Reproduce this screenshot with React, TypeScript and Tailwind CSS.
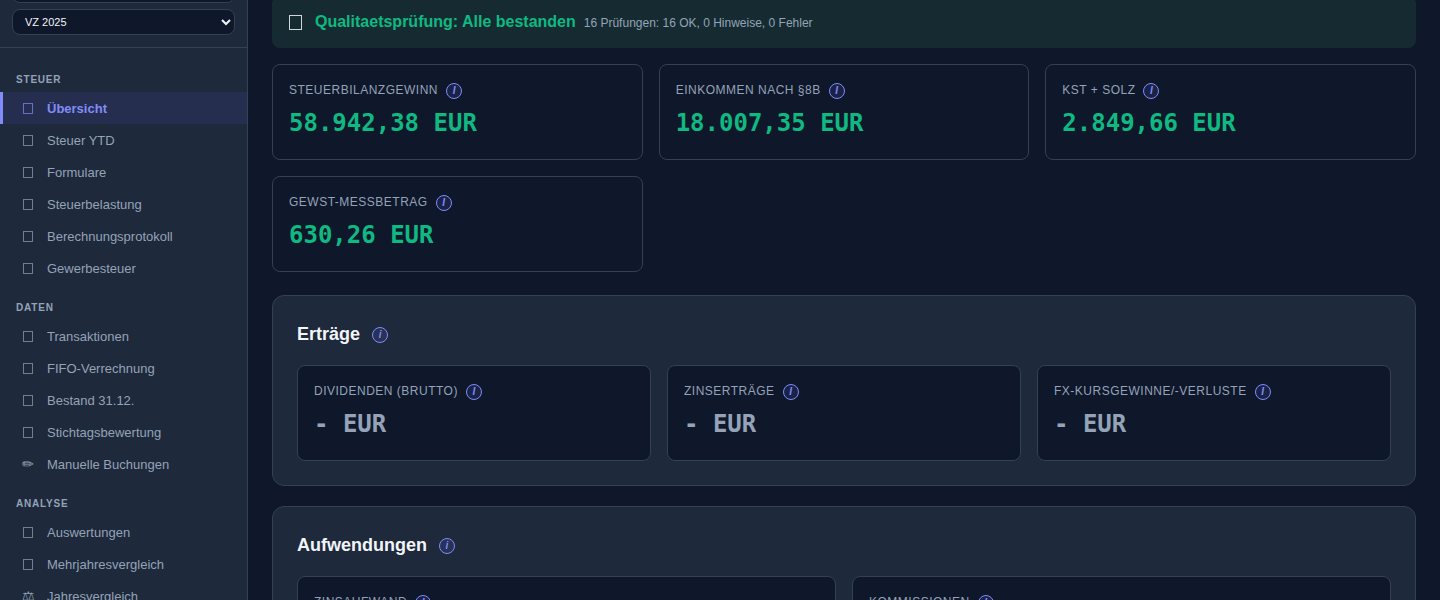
import type { ReactNode } from "react";

type NavEntry = { label: string; glyph?: string };

const sections: { title: string; items: NavEntry[] }[] = [
  {
    title: "Steuer",
    items: [
      { label: "Übersicht" },
      { label: "Steuer YTD" },
      { label: "Formulare" },
      { label: "Steuerbelastung" },
      { label: "Berechnungsprotokoll" },
      { label: "Gewerbesteuer" },
    ],
  },
  {
    title: "Daten",
    items: [
      { label: "Transaktionen" },
      { label: "FIFO-Verrechnung" },
      { label: "Bestand 31.12." },
      { label: "Stichtagsbewertung" },
      { label: "Manuelle Buchungen", glyph: "✏" },
    ],
  },
  {
    title: "Analyse",
    items: [
      { label: "Auswertungen" },
      { label: "Mehrjahresvergleich" },
      { label: "Jahresvergleich", glyph: "⚖" },
    ],
  },
];

function InfoButton({ topic, children }: { topic: string; children: string }) {
  return (
    <button
      type="button"
      aria-label={`Info: ${topic}`}
      className="flex size-4 shrink-0 items-center justify-center rounded-full border border-[#818cf8] bg-[#6366f1]/15 text-[10px] leading-none font-bold text-[#818cf8] italic"
    >
      {children}
    </button>
  );
}

function Card({ label, value, muted = false }: { label: string; value: string; muted?: boolean }) {
  return (
    <div className="h-24 rounded-lg border border-[#334155] bg-[#0f172a] px-4 pt-4">
      <div className="flex h-5 items-center gap-2">
        <span className="pb-0.5 text-[12px] leading-4 tracking-[0.5px] text-[#94a3b8] uppercase">{label}</span>
        <InfoButton topic={label}>I</InfoButton>
      </div>
      <div
        className={`mt-1.5 font-['DejaVu_Sans_Mono',monospace] text-2xl leading-8 font-bold ${muted ? "text-[#94a3b8]" : "text-[#10b981]"}`}
      >
        {value}
      </div>
    </div>
  );
}

function Panel({ title, children }: { title: string; children: ReactNode }) {
  return (
    <section className="rounded-xl border border-[#334155] bg-[#1e293b] p-6">
      <div className="mb-4 flex h-[29px] items-center gap-3">
        <h2 className="pb-0.5 text-[18px] leading-7 font-bold text-[#f1f5f9]">{title}</h2>
        <InfoButton topic={title}>i</InfoButton>
      </div>
      {children}
    </section>
  );
}

export default function App() {
  return (
    <div className="flex h-screen overflow-hidden bg-[#0f172a] font-['Liberation_Sans',Arial,sans-serif] text-[#f1f5f9]">
      <aside className="w-[248px] shrink-0 overflow-hidden border-r border-[#334155] bg-[#1e293b]">
        <div className="-mt-6 flex flex-col gap-1.5 border-b border-[#334155] px-3 pb-3">
          <select
            aria-label="Mandant"
            className="h-[27px] w-full rounded-lg border border-[#334155] bg-[#0f172a] px-2 text-[11px] text-[#f1f5f9]"
          >
            <option></option>
          </select>
          <select
            aria-label="Veranlagungszeitraum"
            className="h-[26px] w-full rounded-lg border border-[#334155] bg-[#0f172a] px-2 text-[11px] text-[#f1f5f9]"
          >
            <option>VZ 2025</option>
          </select>
        </div>
        <nav className="pt-2">
          {sections.map((section, s) => (
            <div key={section.title}>
              <div className="px-4 pt-[17px] pb-[5px] text-[10px] leading-[14px] font-bold tracking-[0.8px] text-[#94a3b8] uppercase">
                {section.title}
              </div>
              {section.items.map((item, i) => (
                <a
                  key={item.label}
                  href="#"
                  className={`flex h-8 items-center gap-2.5 border-l-[3px] pl-4 text-[13px] ${
                    s === 0 && i === 0
                      ? "border-[#818cf8] bg-[#252e4f] font-bold text-[#818cf8]"
                      : "border-transparent text-[#94a3b8]"
                  }`}
                >
                  <span className="flex w-[18px] items-center justify-center text-[14px] font-normal">
                    {item.glyph ?? <span className="h-[11px] w-2.5 border border-current opacity-70" />}
                  </span>
                  <span className="pt-0.5">{item.label}</span>
                </a>
              ))}
            </div>
          ))}
        </nav>
      </aside>

      <main className="-mt-1 min-w-0 flex-1 px-6">
        <div className="flex h-[52px] items-center gap-3 rounded-lg bg-[#162b31] px-4">
          <span className="flex w-[15px] justify-center">
            <span className="h-[15px] w-[13px] border border-[#f1f5f9]/85" />
          </span>
          <div className="flex items-baseline gap-2">
            <strong className="text-base font-bold text-[#10b981]">Qualitaetsprüfung: Alle bestanden</strong>
            <span className="text-[12px] text-[#94a3b8]">16 Prüfungen: 16 OK, 0 Hinweise, 0 Fehler</span>
          </div>
        </div>

        <div className="mt-4 mb-[23px] grid grid-cols-3 gap-4">
          <Card label="Steuerbilanzgewinn" value="58.942,38 EUR" />
          <Card label="Einkommen nach §8b" value="18.007,35 EUR" />
          <Card label="KSt + SolZ" value="2.849,66 EUR" />
          <Card label="GewSt-Messbetrag" value="630,26 EUR" />
        </div>

        <div className="flex flex-col gap-5">
          <Panel title="Erträge">
            <div className="grid grid-cols-3 gap-4">
              <Card label="Dividenden (brutto)" value="- EUR" muted />
              <Card label="Zinserträge" value="- EUR" muted />
              <Card label="FX-Kursgewinne/-verluste" value="- EUR" muted />
            </div>
          </Panel>
          <Panel title="Aufwendungen">
            <div className="grid grid-cols-2 gap-4">
              <Card label="Zinsaufwand" value="- EUR" muted />
              <Card label="Kommissionen" value="- EUR" muted />
            </div>
          </Panel>
        </div>
      </main>
    </div>
  );
}
